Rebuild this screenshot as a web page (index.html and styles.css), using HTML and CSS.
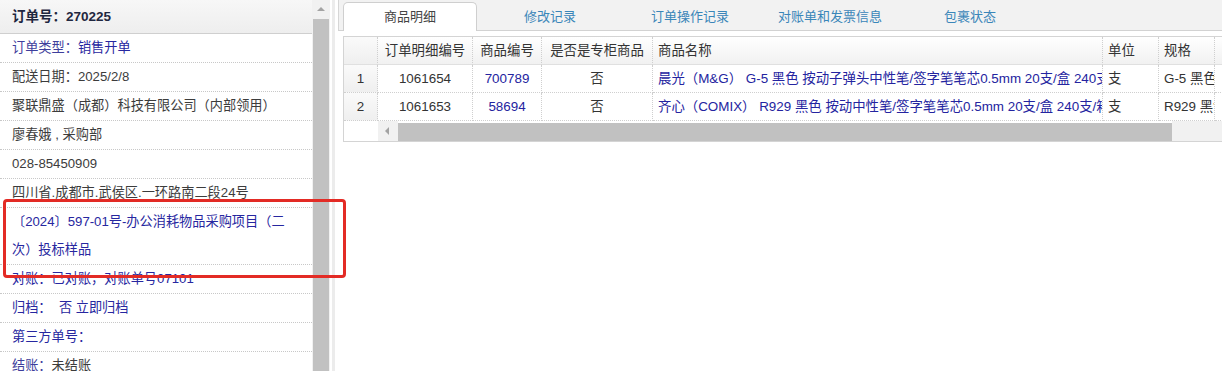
FILE: index.html
```html
<!DOCTYPE html>
<html lang="zh-CN">
<head>
  <meta charset="UTF-8">
  <title>订单详情</title>
  <link rel="stylesheet" href="styles.css">
</head>
<body>
  <div class="page">
    <div class="side">
      <div class="side-list">
        <div class="side-head">订单号：270225</div>
        <div class="side-row blue"><span class="lbl">订单类型：</span>销售开单</div>
        <div class="side-row">配送日期：2025/2/8</div>
        <div class="side-row">聚联鼎盛（成都）科技有限公司（内部领用）</div>
        <div class="side-row">廖春娥 , 采购部</div>
        <div class="side-row">028-85450909</div>
        <div class="side-row">四川省.成都市.武侯区.一环路南二段24号</div>
        <div class="side-row blue">〔2024〕597-01号-办公消耗物品采购项目（二次）投标样品</div>
        <div class="side-row blue">对账：已对账，对账单号07101</div>
        <div class="side-row blue">归档：&nbsp; 否 立即归档</div>
        <div class="side-row blue">第三方单号：</div>
        <div class="side-row"><span class="lbl">结账：</span>未结账</div>
      </div>
      <div class="vscroll">
        <div class="vscroll-up"></div>
        <div class="vscroll-thumb"></div>
      </div>
    </div>
    <div class="gutter"></div>
    <div class="main">
      <div class="tabs">
        <div class="tab active">商品明细</div>
        <div class="tab">修改记录</div>
        <div class="tab">订单操作记录</div>
        <div class="tab">对账单和发票信息</div>
        <div class="tab">包裹状态</div>
      </div>
      <div class="grid-box">
        <div class="grid">
          <div class="th rn"></div>
          <div class="th">订单明细编号</div>
          <div class="th">商品编号</div>
          <div class="th">是否是专柜商品</div>
          <div class="th left">商品名称</div>
          <div class="th left">单位</div>
          <div class="th left">规格</div>
          <div class="th"></div>

          <div class="td rn">1</div>
          <div class="td">1061654</div>
          <div class="td link">700789</div>
          <div class="td">否</div>
          <div class="td left link">晨光（M&amp;G） G-5 黑色 按动子弹头中性笔/签字笔笔芯0.5mm 20支/盒 240支/箱</div>
          <div class="td left">支</div>
          <div class="td left">G-5 黑色</div>
          <div class="td"></div>

          <div class="td rn">2</div>
          <div class="td">1061653</div>
          <div class="td link">58694</div>
          <div class="td">否</div>
          <div class="td left link">齐心（COMIX） R929 黑色 按动中性笔/签字笔笔芯0.5mm 20支/盒 240支/箱</div>
          <div class="td left">支</div>
          <div class="td left">R929 黑色</div>
          <div class="td"></div>
        </div>
        <div class="hscroll">
          <div class="hscroll-pad"></div>
          <div class="hscroll-left"></div>
          <div class="hscroll-thumb"></div>
          <div class="hscroll-rest"></div>
        </div>
      </div>
    </div>
  </div>
  <div class="mark"></div>
</body>
</html>
```

FILE: styles.css
```css
body {
  margin: 0;
  font-family: "Liberation Sans", "Noto Sans CJK SC", sans-serif;
  font-size: 13px;
  color: #333;
  background: #fff;
  overflow: hidden;
}
.page {
  display: flex;
  height: 371px;
}

/* left info panel */
.side {
  display: flex;
  width: 330px;
  flex-shrink: 0;
}
.side-list {
  width: 312px;
}
.side-head {
  height: 33px;
  line-height: 33px;
  padding: 0 12px;
  background: linear-gradient(#f7f7f7, #eeeeee);
  border-bottom: 1px solid #cfcfcf;
  font-weight: bold;
  font-size: 13.5px;
  color: #1f2740;
}
.side-row {
  line-height: 28px;
  padding: 0 14px 0 12px;
  border-bottom: 1px dotted #c8c8c8;
  color: #3c3c3c;
  font-size: 13.2px;
}
.side-row.blue { color: #2727a0; }
.side-row .lbl { color: #3e3e9c; }
.vscroll {
  width: 18px;
  background: #f1f1f1;
  display: flex;
  flex-direction: column;
  align-items: center;
}
.vscroll-up {
  height: 19px;
  width: 18px;
  position: relative;
}
.vscroll-up::after {
  content: "";
  position: absolute;
  left: 5px;
  top: 7px;
  border-left: 4px solid transparent;
  border-right: 4px solid transparent;
  border-bottom: 4px solid #a3a3a3;
}
.vscroll-thumb {
  flex: 1;
  width: 16px;
  background: #c1c1c1;
}
.gutter {
  width: 8px;
  flex-shrink: 0;
  background: linear-gradient(90deg, #fff 0 2px, #ececec 2px 5px, #fff 5px);
}

/* right panel */
.main {
  flex: 1;
  min-width: 0;
}
.tabs {
  display: flex;
  gap: 6px;
  height: 30px;
  padding-left: 4px;
  background: #f2f2f2;
  border-left: 1px solid #d6d6d6;
  border-bottom: 1px solid #d2d2d2;
}
.tab {
  box-sizing: border-box;
  width: 134px;
  margin-top: 2px;
  line-height: 28px;
  text-align: center;
  color: #3a86b9;
  border: 1px solid transparent;
  border-bottom: none;
}
.tab.active {
  background: #fff;
  color: #444;
  border-color: #cfcfcf;
  border-radius: 5px 5px 0 0;
  height: 29px;
}
.grid-box {
  margin: 5px 0 0 5px;
  border: 1px solid #d4d4d4;
  border-right: none;
  overflow: hidden;
}
.grid {
  display: grid;
  grid-template-columns: 34px 95px 69px 111px 450px 56px 56px 40px;
  font-size: 13.4px;
}
.th, .td {
  height: 28px;
  line-height: 28px;
  text-align: center;
  white-space: nowrap;
  overflow: hidden;
  border-right: 1px dotted #cfcfcf;
  border-bottom: 1px dotted #cfcfcf;
  box-sizing: border-box;
}
.th {
  background: linear-gradient(#ffffff, #f1f1f1);
  border-bottom: 1px solid #e0e0e0;
}
.th.left, .td.left {
  text-align: left;
  padding-left: 5px;
  text-overflow: clip;
}
.td.rn, .th.rn {
  background: linear-gradient(#fafafa, #efefef);
}
.td.link { color: #2424a0; }
.hscroll {
  display: flex;
  height: 20px;
}
.hscroll-pad { width: 34px; background: #fff; }
.hscroll-left {
  width: 20px;
  background: #f1f1f1;
  position: relative;
}
.hscroll-left::after {
  content: "";
  position: absolute;
  left: 7px;
  top: 6px;
  border-top: 4px solid transparent;
  border-bottom: 4px solid transparent;
  border-right: 4px solid #a3a3a3;
}
.hscroll-thumb {
  width: 774px;
  background: #c1c1c1;
  margin: 2px 0 0;
}
.hscroll-rest { flex: 1; background: #f1f1f1; }

/* annotation overlay */
.mark {
  position: absolute;
  left: 3px;
  top: 199px;
  width: 343px;
  height: 79px;
  box-sizing: border-box;
  border: 3px solid #e32b25;
  border-radius: 4px;
}
```
